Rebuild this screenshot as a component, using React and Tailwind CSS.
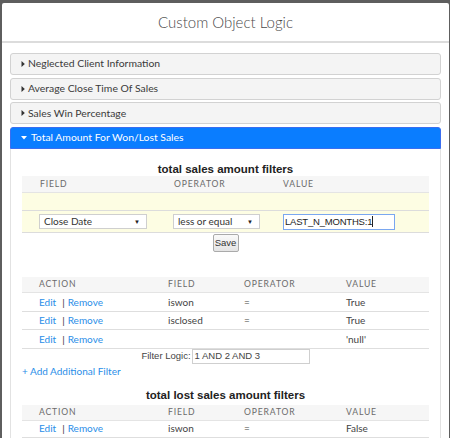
import React from "react";

const lato = { fontFamily: "Lato, 'Open Sans', sans-serif" };
const arial = { fontFamily: "'Liberation Sans', Arial, sans-serif" };

function Tri({ down }) {
  return down ? (
    <svg width="6" height="4" viewBox="0 0 6 4" className="mr-[4px]">
      <path d="M0 0 L6 0 L3 3.5 Z" fill="#fff" />
    </svg>
  ) : (
    <svg width="4" height="6" viewBox="0 0 4 6" className="mr-[3px]">
      <path d="M0.5 0 L3.8 3 L0.5 6 Z" fill="#333" />
    </svg>
  );
}

function AccItem({ label }) {
  return (
    <div className="h-[22.3px] flex items-center pl-[10px] border border-[#d2d2d2] rounded-[3px] bg-[#f4f4f4] text-[10.4px] text-[#3a3a3a]" style={lato}>
      <Tri />
      {label}
    </div>
  );
}

function Hdr2() {
  return (
    <div className="grid grid-cols-[129px_76px_102px_1fr] pl-[17px] h-[16px] items-center bg-[#f6f6f6] border-b border-[#e4e4e4] text-[8.6px] tracking-[0.1em] text-[#6b6b6b] uppercase" style={lato}>
      <div>Action</div>
      <div>Field</div>
      <div>Operator</div>
      <div>Value</div>
    </div>
  );
}

function Row2({ field, op, value }) {
  return (
    <div className="grid grid-cols-[129px_76px_102px_1fr] pl-[17px] h-[18.5px] items-center border-b border-[#dedede] text-[10px] text-[#444]" style={lato}>
      <div className="flex items-center">
        <span className="text-[#2a8ee8]">Edit</span>
        <span className="ml-[6px] mr-[3px] text-[#333]">|</span>
        <span className="text-[#2a8ee8]">Remove</span>
      </div>
      <div>{field}</div>
      <div>{op}</div>
      <div>{value}</div>
    </div>
  );
}

function Select({ label, w }) {
  return (
    <div className={`h-[15px] ${w} flex items-center justify-between pl-[4px] pr-[6px] bg-white border border-[#cfcfcf] text-[10px] text-[#333]`} style={lato}>
      <span>{label}</span>
      <span className="text-[6px] text-[#222]">▼</span>
    </div>
  );
}

export default function App() {
  return (
    <div className="w-[450px] h-[438px] overflow-hidden bg-[#5e5e5e] pl-[2px] pr-[1px] pt-[3px]">
      <div className="bg-white h-full rounded-t-[2px]">
        <div className="h-[40px] flex items-center justify-center border-b-2 border-[#dcdcdc] text-[15px] font-light text-[#4a4a4a]" style={lato}>
          Custom Object Logic
        </div>
        <div className="px-[8px] pt-[10px] flex flex-col gap-[2.3px]">
          <AccItem label="Neglected Client Information" />
          <AccItem label="Average Close Time Of Sales" />
          <AccItem label="Sales Win Percentage" />
          <div>
            <div className="h-[22.5px] flex items-center pl-[10px] border border-[#3a6ef0] rounded-t-[3px] bg-[#0a7dff] text-[10.4px] text-white" style={lato}>
              <Tri down />
              Total Amount For Won/Lost Sales
            </div>
            <div className="border border-t-0 border-[#e2e2e2] px-[11px] h-[300px]">
              <div className="text-center text-[11.5px] font-bold text-[#222] pt-[13px] leading-[14px]" style={arial}>
                total sales amount filters
              </div>
              <div className="grid grid-cols-[134px_109px_1fr] pl-[18px] h-[17px] items-center bg-[#f6f6f6] border-b border-[#e4e4e4] text-[8.6px] tracking-[0.1em] text-[#6b6b6b] uppercase" style={lato}>
                <div>Field</div>
                <div>Operator</div>
                <div>Value</div>
              </div>
              <div className="h-[18px] bg-[#fdfde3] border-b border-[#dcdcdc]"></div>
              <div className="h-[22px] bg-[#fdfde3] border-b border-[#dcdcdc] grid grid-cols-[134px_110px_1fr] pl-[17px] items-center">
                <Select label="Close Date" w="w-[108px]" />
                <Select label="less or equal" w="w-[87px]" />
                <div className="h-[16px] w-[112px] bg-white border border-[#7aa7f0] text-[9.5px] tracking-[-0.2px] text-[#222] pl-[1px] flex items-center" style={arial}>
                  LAST_N_MONTHS:1<span className="w-px h-[11px] bg-[#222]"></span>
                </div>
              </div>
              <div className="flex justify-center pt-[1px]">
                <div className="h-[18px] w-[26px] justify-center flex items-center border border-[#aaa] rounded-[2px] bg-gradient-to-b from-[#fafafa] to-[#e4e4e4] text-[9.5px] text-[#333]" style={arial}>
                  Save
                </div>
              </div>
              <div className="h-[25px]"></div>
              <Hdr2 />
              <Row2 field="iswon" op="=" value="True" />
              <Row2 field="isclosed" op="=" value="True" />
              <Row2 field="" op="" value="'null'" />
              <div className="h-[16px] flex justify-center items-start text-[9.5px] text-[#444]" style={arial}>
                <span className="h-[15px] flex items-center">Filter Logic:</span>
                <div className="ml-[1px] h-[15px] w-[118px] border border-[#cfcfcf] pl-[2px] flex items-center text-[#444]">1 AND 2 AND 3</div>
              </div>
              <div className="text-[10px] text-[#2a8ee8] h-[12px] leading-[12px]" style={lato}>
                + Add Additional Filter
              </div>
              <div className="text-center text-[11.5px] font-bold text-[#222] pt-[11px] leading-[14px] pb-[3px]" style={arial}>
                total lost sales amount filters
              </div>
              <Hdr2 />
              <div className="-mt-[1px]">
                <Row2 field="iswon" op="=" value="False" />
              </div>
            </div>
          </div>
        </div>
      </div>
    </div>
  );
}
